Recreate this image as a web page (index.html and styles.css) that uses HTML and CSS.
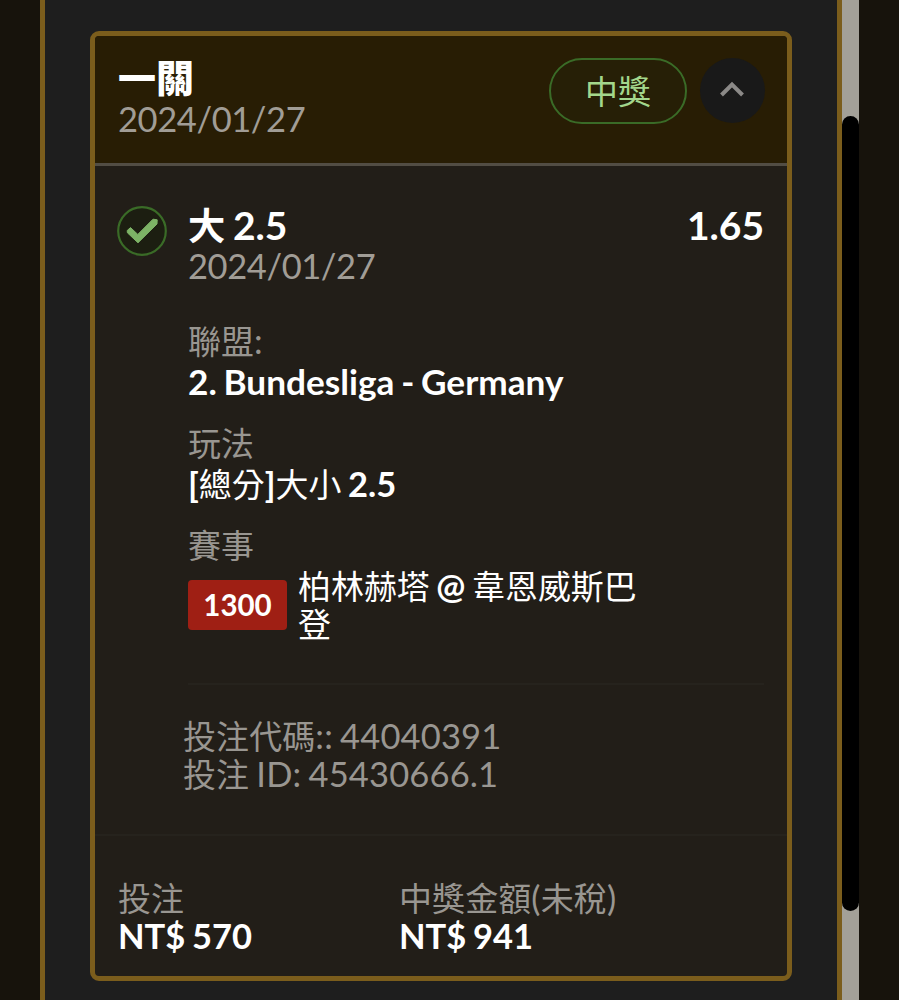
FILE: index.html
```html
<!DOCTYPE html>
<html lang="zh-Hant">
<head>
    <meta charset="UTF-8">
    <meta name="viewport" content="width=device-width, initial-scale=1.0">
    <title>投注紀錄</title>
    <link rel="stylesheet" href="styles.css">
</head>
<body>
    <main class="panel">
        <section class="card">
            <header class="card-header">
                <div>
                    <h1 class="title">一關</h1>
                    <p class="date">2024/01/27</p>
                </div>
                <div class="actions">
                    <span class="status"><span class="zh">中獎</span></span>
                    <button class="toggle" type="button" aria-label="收合">
                        <svg viewBox="0 0 65 65" width="65" height="65"><path d="M21.5 37 L32 26.5 L42.5 37" fill="none" stroke="#8b8987" stroke-width="4"/></svg>
                    </button>
                </div>
            </header>

            <div class="bet">
                <svg class="check" viewBox="0 0 50 50" width="50" height="50">
                    <circle cx="25" cy="25" r="23.8" fill="#1c1e11" stroke="#3a6b27" stroke-width="2.2"/>
                    <path d="M10.2 24.5 L13.5 21.6 L20.8 28.4 L36 13.2 L40.2 13.8 L40 18 L21 36.8 L10.4 26.8 Z" fill="#7db366" stroke="#7db366" stroke-width="1" stroke-linejoin="round"/>
                </svg>
                <div class="bet-body">
                    <div class="pick">
                        <h2><span class="zh">大</span> 2.5</h2>
                        <span class="odds">1.65</span>
                    </div>
                    <p class="date">2024/01/27</p>

                    <dl class="details">
                        <dt><span class="zh">聯盟</span>:</dt>
                        <dd class="league">2. Bundesliga - Germany</dd>
                        <dt><span class="zh">玩法</span></dt>
                        <dd>[<span class="zh">總分</span>]<span class="zh">大小</span> 2.5</dd>
                        <dt><span class="zh">賽事</span></dt>
                    </dl>
                    <div class="match">
                        <span class="code">1300</span>
                        <p class="teams"><span class="zh">柏林赫塔</span> @ <span class="zh">韋恩威斯巴登</span></p>
                    </div>

                    <div class="ids">
                        <p><span class="zh">投注代碼</span>:: 44040391</p>
                        <p><span class="zh">投注</span> ID: 45430666.1</p>
                    </div>
                </div>
            </div>

            <footer class="totals">
                <div class="total">
                    <p class="label"><span class="zh">投注</span></p>
                    <p class="amount">NT$ 570</p>
                </div>
                <div class="total">
                    <p class="label"><span class="zh">中獎金額</span>(<span class="zh">未稅</span>)</p>
                    <p class="amount">NT$ 941</p>
                </div>
            </footer>
        </section>
    </main>
    <div class="scrollbar">
        <div class="thumb"></div>
    </div>
</body>
</html>
```
FILE: styles.css
```css
/* General Styling */
* {
    box-sizing: border-box;
    margin: 0;
    padding: 0;
}

body {
    display: flex;
    height: 1000px;
    padding-left: 40px;
    overflow: hidden;
    background: #17130c;
    color: #fff;
    font-family: "Lato", "Noto Sans CJK TC", sans-serif;
    font-size: 34.5px;
    line-height: 38px;
    word-spacing: -1.8px;
}

svg {
    display: block;
}

.zh {
    font-size: 0.955em;
}

.panel {
    width: 802px;
    padding: 31px 45px 0;
    background: #1e1e1e;
    border: solid #7b5d1c;
    border-width: 0 5px;
}

/* Card */
.card {
    height: 950px;
    background: #221e18;
    border: 5px solid #7b5d1c;
    border-radius: 9px;
    overflow: hidden;
}

.card-header {
    display: flex;
    justify-content: space-between;
    height: 130px;
    padding: 22px 22px 0 23px;
    background: #281d04;
    border-bottom: 3px solid #524d44;
}

.title {
    margin-bottom: 4px;
    font-size: 38px;
    font-weight: 900;
    line-height: 38px;
}

.date {
    color: #a19d96;
    letter-spacing: -0.4px;
}

.actions {
    display: flex;
    gap: 13px;
}

.status {
    width: 138px;
    height: 66px;
    border: 2.5px solid #3a6b27;
    border-radius: 33px;
    background: #261f06;
    color: #a3d78c;
    line-height: 62px;
    text-align: center;
}

.toggle {
    width: 65px;
    height: 65px;
    border: none;
    border-radius: 50%;
    background: #191919;
}

/* Bet */
.bet {
    display: flex;
    gap: 21px;
    height: 670px;
    padding: 39px 23px 0 22px;
    border-bottom: 2px solid #26231d;
}

.check {
    margin-top: 1px;
}

.bet-body {
    flex: 1;
}

.pick {
    display: flex;
    justify-content: space-between;
    margin-bottom: 1px;
    font-size: 39px;
    font-weight: bold;
    line-height: 41px;
}

.pick h2 {
    font-size: 39px;
}

.details {
    margin-top: 34px;
}

.details dt,
.label,
.ids {
    color: #999691;
}

.details dt {
    line-height: 44px;
}

.details dd {
    margin-bottom: 20px;
    font-weight: bold;
    line-height: 38px;
}

.details .league {
    margin-bottom: 22px;
    font-size: 35.2px;
    line-height: 36px;
}

.details dd .zh {
    font-weight: 400;
}

.match {
    display: flex;
    align-items: center;
    gap: 11px;
}

.code {
    width: 99px;
    height: 50px;
    border-radius: 4px;
    background: #9f1f14;
    font-size: 29.5px;
    font-weight: bold;
    line-height: 50px;
    text-align: center;
}

.teams {
    width: 345px;
    font-weight: bold;
}

.teams .zh {
    font-weight: 400;
}

.ids {
    margin-top: 40px;
    padding-top: 32px;
    border-top: 2px solid #26231d;
    letter-spacing: 0.15px;
}

.ids p {
    margin-left: -5px;
}

/* Totals */
.totals {
    display: flex;
    padding: 43px 23px 0;
}

.total {
    width: 281px;
}

.total:last-child {
    flex: 1;
}

.label {
    letter-spacing: 0.15px;
}

.amount {
    font-weight: bold;
}

/* Scrollbar */
.scrollbar {
    width: 17px;
    padding-top: 116px;
    background: #a3a098;
}

.thumb {
    height: 795px;
    border-radius: 9px;
    background: #000;
}
```
